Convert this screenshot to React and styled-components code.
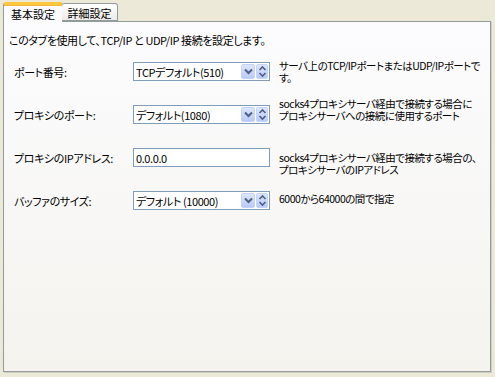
import React from "react";
import styled, { createGlobalStyle } from "styled-components";

const GlobalStyle = createGlobalStyle`
  html, body {
    margin: 0;
    padding: 0;
    background: #ece9d8;
  }
  body {
    font-family: "Noto Sans CJK JP", "Liberation Sans", sans-serif;
    font-size: 11px;
    font-feature-settings: "palt";
    letter-spacing: -0.4px;
    color: #000;
  }
`;

const rows = [
  {
    label: "ポート番号:",
    kind: "combo",
    value: "TCPデフォルト(510)",
    desc: ["サーバ上のTCP/IPポートまたはUDP/IPポートで", "す。"],
    shift: 0,
  },
  {
    label: "プロキシのポート:",
    kind: "combo",
    value: "デフォルト(1080)",
    desc: ["socks4プロキシサーバ経由で接続する場合に", "プロキシサーバへの接続に使用するポート"],
    shift: -5,
  },
  {
    label: "プロキシのIPアドレス:",
    kind: "input",
    value: "0.0.0.0",
    desc: ["socks4プロキシサーバ経由で接続する場合の、", "プロキシサーバのIPアドレス"],
    shift: 6,
  },
  {
    label: "バッファのサイズ:",
    kind: "combo",
    value: "デフォルト (10000)",
    desc: ["6000から64000の間で指定"],
    shift: -2,
  },
];

const ChevronDown = () => (
  <svg width="9" height="7" viewBox="0 0 9 7">
    <path d="M1 1.5 L4.5 5 L8 1.5" fill="none" stroke="#4d6185" strokeWidth="2" />
  </svg>
);

const SpinArrows = () => (
  <svg width="9" height="13" viewBox="0 0 9 13">
    <path d="M1.5 5 L4.5 2 L7.5 5" fill="none" stroke="#4d6185" strokeWidth="1.6" />
    <path d="M1.5 8 L4.5 11 L7.5 8" fill="none" stroke="#4d6185" strokeWidth="1.6" />
  </svg>
);

export default function App() {
  return (
    <>
      <GlobalStyle />
      <Window>
        <TabStrip>
          <Tab $active>基本設定</Tab>
          <Tab>詳細設定</Tab>
        </TabStrip>
        <Panel>
          <Intro>このタブを使用して、TCP/IP と UDP/IP 接続を設定します。</Intro>
          <Form>
            {rows.map((r) => (
              <Row key={r.label}>
                <Label>{r.label}</Label>
                {r.kind === "combo" ? (
                  <Combo>
                    <ComboText>{r.value}</ComboText>
                    <ArrowButton>
                      <ChevronDown />
                    </ArrowButton>
                    <ArrowButton $spin>
                      <SpinArrows />
                    </ArrowButton>
                  </Combo>
                ) : (
                  <TextBox>{r.value}</TextBox>
                )}
                <Desc $shift={r.shift}>
                  {r.desc.map((line) => (
                    <div key={line}>{line}</div>
                  ))}
                </Desc>
              </Row>
            ))}
          </Form>
        </Panel>
      </Window>
    </>
  );
}

const Window = styled.div`
  width: 495px;
  height: 377px;
  padding: 2px 0 0 3px;
  box-sizing: border-box;
  display: flex;
  flex-direction: column;
`;

const TabStrip = styled.div`
  display: flex;
  align-items: flex-end;
  height: 20px;
  position: relative;
  z-index: 2;
  margin-bottom: -1px;
`;

const Tab = styled.div`
  box-sizing: border-box;
  display: flex;
  align-items: center;
  justify-content: center;
  letter-spacing: 0;
  border: 1px solid #919b9c;
  border-radius: 3px 3px 0 0;
  ${(p) =>
    p.$active
      ? `
    width: 60px;
    height: 20px;
    background: #fcfcfe;
    border-top: 3px solid #ffc83c;
    border-bottom: none;
    box-shadow: inset 0 1px 0 #f5b73a;
  `
      : `
    width: 56px;
    height: 18px;
    margin-left: -1px;
    margin-bottom: 1px;
    border-left: none;
    background: linear-gradient(#ffffff, #ecebe6);
    padding-top: 1px;
  `}
`;

const Panel = styled.div`
  width: 488px;
  height: 351px;
  box-sizing: border-box;
  border: 1px solid #919b9c;
  box-shadow: 1px 1px 0 #d0cebf;
  background: linear-gradient(#fcfcfe, #f4f3ee);
  padding: 11px 0 0 5px;
  display: flex;
  flex-direction: column;
`;

const Intro = styled.div`
  line-height: 14px;
  white-space: nowrap;
`;

const Form = styled.div`
  display: flex;
  flex-direction: column;
  margin-top: 3px;
`;

const Row = styled.div`
  display: grid;
  grid-template-columns: 115px 137px auto;
  column-gap: 9px;
  align-items: center;
  height: 43px;
`;

const Label = styled.div`
  padding-left: 5px;
  white-space: nowrap;
`;

const Combo = styled.div`
  box-sizing: border-box;
  height: 19px;
  border: 1px solid #7f9db9;
  background: #fff;
  display: flex;
  align-items: center;
  padding: 1px 1px 1px 2px;
  gap: 1px;
`;

const ComboText = styled.div`
  flex: 1;
  white-space: nowrap;
  overflow: hidden;
`;

const ArrowButton = styled.div`
  box-sizing: border-box;
  width: ${(p) => (p.$spin ? "12px" : "14px")};
  height: 15px;
  border: 1px solid #c3d3fd;
  border-radius: 2px;
  background: linear-gradient(#dce6fd, #b8caf5);
  display: flex;
  align-items: center;
  justify-content: center;
`;

const TextBox = styled.div`
  box-sizing: border-box;
  height: 19px;
  border: 1px solid #7f9db9;
  background: #fff;
  padding-left: 2px;
  display: flex;
  align-items: center;
`;

const Desc = styled.div`
  font-size: 10.5px;
  letter-spacing: -0.5px;
  line-height: 12px;
  white-space: nowrap;
  position: relative;
  top: ${(p) => p.$shift}px;
`;
